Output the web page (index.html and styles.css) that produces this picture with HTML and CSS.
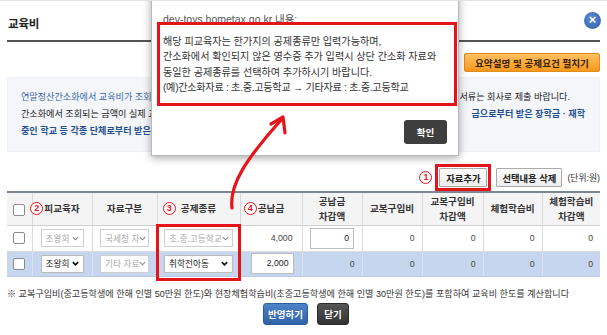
FILE: index.html
```html
<!DOCTYPE html>
<html lang="ko">
<head>
<meta charset="utf-8">
<title>교육비</title>
<link rel="stylesheet" href="styles.css">
</head>
<body>
<div class="page">
  <header class="head">
    <h1 class="title">교육비</h1>
    <span class="close">&times;</span>
  </header>

  <div class="top-actions">
    <button class="btn-orange">요약설명 및 공제요건 펼치기</button>
  </div>

  <div class="info">
    <p class="line l1"><span class="lt blue">연말정산간소화에서 교육비가 조회되지 않는 경우에는 교육비납입증명서 등 증빙</span><span class="rt">서류는 회사로 제출 바랍니다.</span></p>
    <p class="line l2"><span class="lt dark">간소화에서 조회되는 금액이 실제 교육비와 다른 경우 수정하여 입력하고 직장 또는 보조</span><span class="rt blue b">금으로부터 받은 장학금 · 재학</span></p>
    <p class="line"><span class="lt blue b">중인 학교 등 각종 단체로부터 받은 장학금은 차감하여 입력합니다.</span></p>
  </div>

  <div class="toolbar">
    <i class="num">1</i>
    <span class="mark"><button class="btn">자료추가</button></span>
    <button class="btn">선택내용 삭제</button>
    <span class="unit">(단위:원)</span>
  </div>

  <div class="grid-wrap">
    <table class="grid">
      <colgroup>
        <col style="width:25px"><col style="width:60px"><col style="width:65px"><col style="width:83px"><col style="width:62px">
        <col style="width:60px"><col style="width:60px"><col style="width:61px"><col style="width:59px"><col style="width:58px">
      </colgroup>
      <thead>
        <tr>
          <th><span class="cb"></span></th>
          <th><span class="lbl"><i class="num tag">2</i>피교육자</span></th>
          <th>자료구분</th>
          <th><span class="lbl"><i class="num tag gap">3</i>공제종류</span></th>
          <th><span class="lbl"><i class="num tag tight">4</i>공납금</span></th>
          <th>공납금<br>차감액</th>
          <th>교복구입비</th>
          <th>교복구입비<br>차감액</th>
          <th>체험학습비</th>
          <th>체험학습비<br>차감액</th>
        </tr>
      </thead>
      <tbody>
        <tr>
          <td class="c"><span class="cb"></span></td>
          <td class="c"><span class="sel dis w43">조왕희<svg viewBox="0 0 8 5"><path d="M1 1l3 3 3-3"/></svg></span></td>
          <td class="c"><span class="sel dis w49">국세청 자<svg viewBox="0 0 8 5"><path d="M1 1l3 3 3-3"/></svg></span></td>
          <td class="c"><span class="sel dis w69">초.중.고등학교<svg viewBox="0 0 8 5"><path d="M1 1l3 3 3-3"/></svg></span></td>
          <td class="r amt">4,000</td>
          <td class="c"><span class="inp">0</span></td>
          <td class="r">0</td>
          <td class="r">0</td>
          <td class="r">0</td>
          <td class="r">0</td>
        </tr>
        <tr class="hl">
          <td class="c"><span class="cb"></span></td>
          <td class="c"><span class="sel on w43">조왕희<svg viewBox="0 0 8 5"><path d="M1 1l3 3 3-3"/></svg></span></td>
          <td class="c"><span class="sel dis w49">기타 자료<svg viewBox="0 0 8 5"><path d="M1 1l3 3 3-3"/></svg></span></td>
          <td class="c"><span class="sel on w69">취학전아동<svg viewBox="0 0 8 5"><path d="M1 1l3 3 3-3"/></svg></span></td>
          <td class="c"><span class="inp w43">2,000</span></td>
          <td class="r">0</td>
          <td class="r">0</td>
          <td class="r">0</td>
          <td class="r">0</td>
          <td class="r">0</td>
        </tr>
      </tbody>
    </table>
    <span class="col-mark"></span>
  </div>

  <p class="note">※ 교복구입비(중고등학생에 한해 인별 50만원 한도)와 현장체험학습비(초중고등학생에 한해 인별 30만원 한도)를 포함하여 교육비 한도를 계산합니다</p>

  <div class="bottom">
    <button class="btn-blue">반영하기</button>
    <button class="btn-dark">닫기</button>
  </div>
</div>

<div class="dialog">
  <div class="dlg-title">dev-toys.hometax.go.kr 내용:</div>
  <div class="dlg-msg">
    <p>해당 피교육자는 한가지의 공제종류만 입력가능하며,</p>
    <p>간소화에서 확인되지 않은 영수증 추가 입력시 상단 간소화 자료와</p>
    <p>동일한 공제종류를 선택하여 추가하시기 바랍니다.</p>
    <p class="ex">(예)간소화자료 : 초.중.고등학교 → 기타자료 : 초.중.고등학교</p>
  </div>
  <div class="dlg-foot"><button class="btn-ok">확인</button></div>
</div>

<svg class="arrow" width="607" height="335" viewBox="0 0 607 335">
  <path d="M232 207 C 229 184 246 158 282 118" />
  <path d="M271 123 L 283 116 L 285 132" />
</svg>
</body>
</html>
```

FILE: styles.css
```css
* { box-sizing: border-box; }

html, body { margin: 0; padding: 0; }

body {
  width: 607px;
  height: 335px;
  overflow: hidden;
  position: relative;
  background: #fff;
  border-top: 1px solid #e2e2e2;
  font-family: "Liberation Sans", "Noto Sans CJK KR", sans-serif;
  color: #333;
}

p { margin: 0; }
button { font-family: inherit; cursor: pointer; }

.page { padding: 0 7px; }

/* header */
.head {
  display: flex;
  align-items: center;
  justify-content: space-between;
  height: 41px;
  padding-top: 4px;
  border-bottom: 2px solid #555;
}
.title {
  margin: 0 0 0 1px;
  font-size: 11.5px;
  font-weight: 700;
  color: #222;
  letter-spacing: -0.2px;
}
.close {
  width: 17px;
  height: 17px;
  margin: -4px -1px 0 0;
  border-radius: 50%;
  background: radial-gradient(circle at 40% 35%, #5b8ad0, #2f5fa6);
  color: #fff;
  font-size: 13px;
  line-height: 16px;
  text-align: center;
  font-weight: 700;
}

/* orange button */
.top-actions {
  display: flex;
  justify-content: flex-end;
  margin-top: 11px;
}
.btn-orange {
  width: 136px;
  height: 19px;
  padding: 0;
  border: 1px solid #e48a16;
  border-radius: 2px;
  background: linear-gradient(#fcc062, #f7991f);
  color: #3a2200;
  font-size: 9.6px;
  font-weight: 700;
  white-space: nowrap;
}

/* info box */
.info {
  margin-top: 5px;
  height: 75px;
  padding: 11px 13px 0;
  background: #f4f6fa;
  border: 1px solid #eef1f6;
  font-size: 9.1px;
  line-height: 17px;
  overflow: hidden;
}
.info .line { display: flex; white-space: nowrap; color: #222; }
.info .lt { flex: 1; min-width: 0; overflow: hidden; }
.info .rt { flex: none; }
.info .l1 { margin-right: 16px; }
.info .l2 { margin-right: 1px; }
.info .blue { color: #3566a8; }
.info .b { font-weight: 700; color: #1f4f91; }
.info .dark { color: #222; }

/* toolbar */
.toolbar {
  display: flex;
  justify-content: flex-end;
  align-items: center;
  margin-top: 12px;
  height: 27px;
}
.mark {
  display: inline-flex;
  padding: 1px;
  border: 3px solid #e5141b;
  margin-left: 3px;
}
.btn {
  height: 19px;
  padding: 0 3px;
  border: 1px solid #aaa;
  border-radius: 1px;
  background: linear-gradient(#fff, #ececec);
  color: #222;
  font-size: 9.3px;
  font-weight: 700;
  white-space: nowrap;
}
.mark .btn { width: 48px; }
.toolbar > .btn { width: 66px; margin-left: 5px; }
.unit { margin-left: 5px; font-size: 8.8px; color: #333; white-space: nowrap; }

.num {
  display: inline-flex;
  align-items: center;
  justify-content: center;
  width: 13px;
  height: 13px;
  border: 1.5px solid #e5141b;
  border-radius: 50%;
  color: #e5141b;
  font-style: normal;
  font-weight: 700;
  font-size: 9px;
  line-height: 1;
  background: #fff;
}

/* table */
.grid-wrap { position: relative; }
.grid {
  width: 593px;
  border-collapse: collapse;
  table-layout: fixed;
  font-size: 8.7px;
}
.grid thead tr { height: 33px; }
.grid th {
  border-top: 2px solid #7d8690;
  border-left: 1px solid #d9d9d9;
  border-bottom: 1px solid #d0d0d0;
  background: #f4f4f5;
  font-weight: 700;
  color: #333;
  line-height: 15px;
  padding: 0;
  text-align: center;
  font-size: 9.6px;
  white-space: nowrap;
}
.grid th:first-child { border-left: 0; }
.grid td {
  border-left: 1px solid #dcdcdc;
  border-bottom: 1px solid #dcdcdc;
  padding: 0;
  height: 26px;
  color: #444;
}
.grid td:first-child { border-left: 0; }
.grid tbody tr:last-child td { height: 25px; }
.grid .c { text-align: center; }
.grid .r { text-align: right; padding-right: 7px; }
.grid .amt { padding-right: 9px; }
.grid tr.hl td { background: #c6d6ee; border-left-color: #d9e3f3; border-bottom-color: #b9c9e2; }

.lbl { position: relative; }
.tag { position: absolute; right: 100%; top: 50%; margin-top: -7px; margin-right: 1px; }
.tag.gap { margin-right: 5px; }
.tag.tight { margin-right: 1px; }

.cb {
  display: inline-block;
  width: 12px;
  height: 12px;
  vertical-align: middle;
  border: 1px solid #8c8c8c;
  border-radius: 2px;
  background: #fff;
}

.sel {
  display: inline-flex;
  align-items: center;
  justify-content: space-between;
  height: 18px;
  padding: 0 4px 0 4px;
  border: 1px solid #cfcfcf;
  background: #fff;
  vertical-align: middle;
  font-size: 8.7px;
  white-space: nowrap;
  overflow: hidden;
}
.sel svg { width: 7px; height: 5px; flex: none; fill: none; stroke-width: 1.3; }
.sel.dis { color: #a8a8a8; }
.sel.dis svg { stroke: #8a8a8a; }
.sel.on { color: #222; border-color: #bcbcbc; }
.sel.on svg { stroke: #111; stroke-width: 2; }
.w43 { width: 43px; }
.w49 { width: 49px; }
.w69 { width: 69px; }

.inp {
  display: inline-block;
  width: 44px;
  height: 21px;
  line-height: 19px;
  padding-right: 4px;
  border: 1px solid #bdbdbd;
  background: #fff;
  text-align: right;
  vertical-align: middle;
  color: #222;
}
.inp.w43 { width: 43px; margin-left: 2px; }

.col-mark {
  position: absolute;
  left: 149px;
  top: 33px;
  width: 85px;
  height: 57px;
  border: 3px solid #e5141b;
  pointer-events: none;
}

.note {
  margin-top: 10px;
  font-size: 9.1px;
  line-height: 14px;
  color: #333;
  white-space: nowrap;
}

.bottom {
  display: flex;
  justify-content: center;
  gap: 9px;
  margin-top: 2px;
  padding-left: 5px;
}
.btn-blue, .btn-dark {
  height: 22px;
  padding: 0;
  border-radius: 3px;
  color: #fff;
  font-size: 9.5px;
  font-weight: 700;
}
.btn-blue {
  width: 45px;
  border: 1px solid #2d5d9f;
  background: linear-gradient(#4f83c8, #2f62a8);
}
.btn-dark {
  width: 32px;
  border: 1px solid #2a2a2a;
  background: linear-gradient(#555, #333);
}

/* alert dialog */
.dialog {
  position: absolute;
  left: 151px;
  top: -10px;
  width: 308px;
  height: 165px;
  background: #fff;
  border: 1px solid #b9b9b9;
  box-shadow: 0 2px 8px rgba(0, 0, 0, 0.35);
  padding: 0 0 0 5px;
}
.dlg-title {
  margin-top: 20px;
  padding-left: 6px;
  height: 10px;
  font-size: 10.5px;
  line-height: 14px;
  color: #555;
  white-space: nowrap;
}
.dlg-msg {
  position: relative;
  width: 300px;
  padding: 9px 0 8px 3px;
  border: 3px solid #e5141b;
  background: #fff;
  font-size: 10.1px;
  line-height: 15.3px;
  color: #333;
  white-space: nowrap;
  overflow: hidden;
}
.dlg-msg .ex { letter-spacing: -0.25px; }
.dlg-foot {
  display: flex;
  justify-content: flex-end;
  margin-top: 14px;
  padding-right: 11px;
}
.btn-ok {
  width: 43px;
  height: 24px;
  padding: 0;
  border: 0;
  border-radius: 3px;
  background: #3e3e3e;
  color: #fff;
  font-size: 9.5px;
  font-weight: 700;
}

.arrow {
  position: absolute;
  left: 0;
  top: 0;
  pointer-events: none;
  fill: none;
  stroke: #e8141c;
  stroke-width: 3.2;
  stroke-linecap: round;
  stroke-linejoin: round;
}
```
